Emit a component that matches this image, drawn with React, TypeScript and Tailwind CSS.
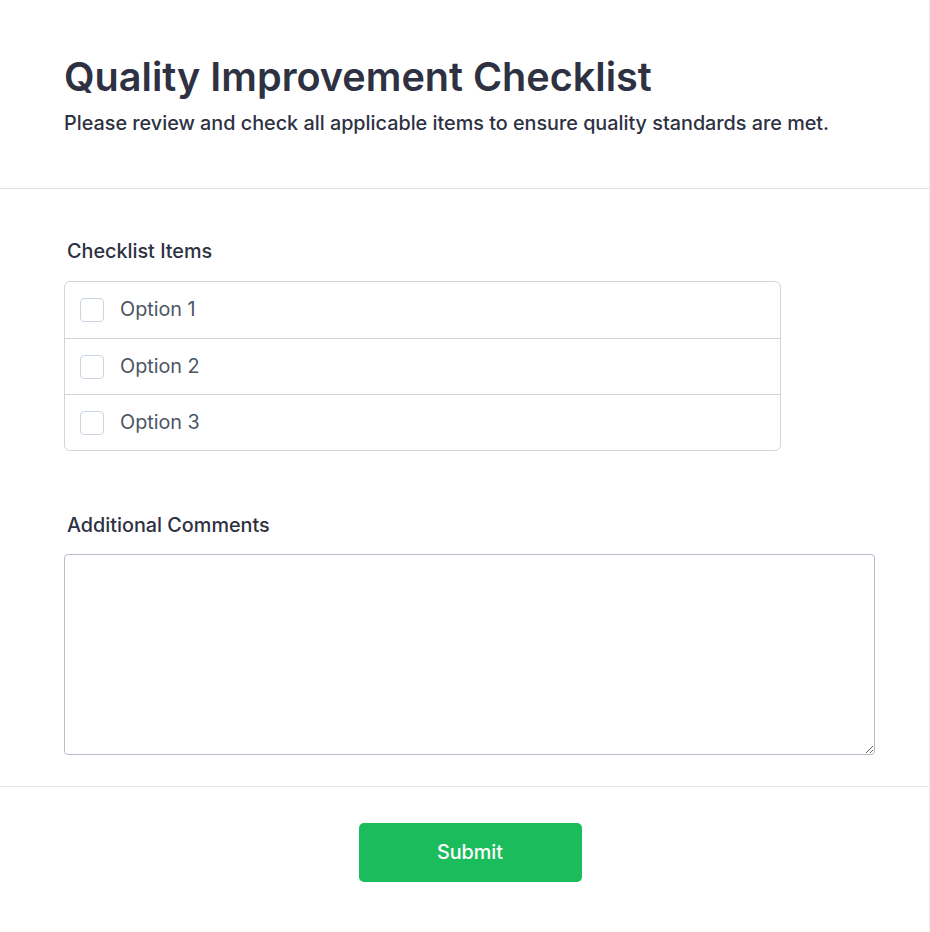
const OPTIONS = ["Option 1", "Option 2", "Option 3"];

export default function App() {
  return (
    <div className="min-h-[932px] w-full border-r border-[#eef0f3] bg-white font-['Inter','Noto_Sans',sans-serif] text-[#2d3142]">
      <header className="px-16 pt-[53px] pb-[51px]">
        <h1 className="text-[39.6px] font-semibold leading-[48px] text-[#2d3142]">
          Quality Improvement Checklist
        </h1>
        <p className="mt-[8px] text-[19.8px] font-medium leading-7 text-[#2d3142]">
          Please review and check all applicable items to ensure quality standards are met.
        </p>
      </header>

      <div className="border-t border-[#dcdde3]" />

      <main className="pl-16 pr-[54px] pt-[48px]">
        <section>
          <label className="ml-[3px] block text-[19.8px] font-medium leading-7 text-[#2d3142]">
            Checklist Items
          </label>
          <div className="mt-[16px] w-[717px] rounded-md border border-[#d4d4d8]">
            {OPTIONS.map((opt, i) => (
              <label
                key={opt}
                className={`flex h-[56px] items-center gap-4 px-[15px] ${i > 0 ? "border-t border-[#d4d4d8]" : ""}`}
              >
                <input
                  type="checkbox"
                  className="h-6 w-6 appearance-none rounded border border-[#cbd5e1] bg-white"
                />
                <span className="text-[19.8px] text-[#4b5563]">{opt}</span>
              </label>
            ))}
          </div>
        </section>

        <section className="mt-[60px]">
          <label className="ml-[3px] block text-[19.8px] font-medium leading-7 text-[#2d3142]">
            Additional Comments
          </label>
          <textarea className="mt-[15px] block h-[201px] w-full rounded border border-[#b8bccb] bg-white p-3 text-lg outline-none" />
        </section>
      </main>

      <div className="mt-[31px] border-t border-[#e5e7eb]" />

      <footer className="flex justify-center pl-[11px] pt-[36px] pb-[50px]">
        <button
          type="button"
          className="h-[59px] w-[223px] rounded-[5px] bg-[#1abc5c] text-[19.8px] font-medium text-white"
        >
          Submit
        </button>
      </footer>
    </div>
  );
}
